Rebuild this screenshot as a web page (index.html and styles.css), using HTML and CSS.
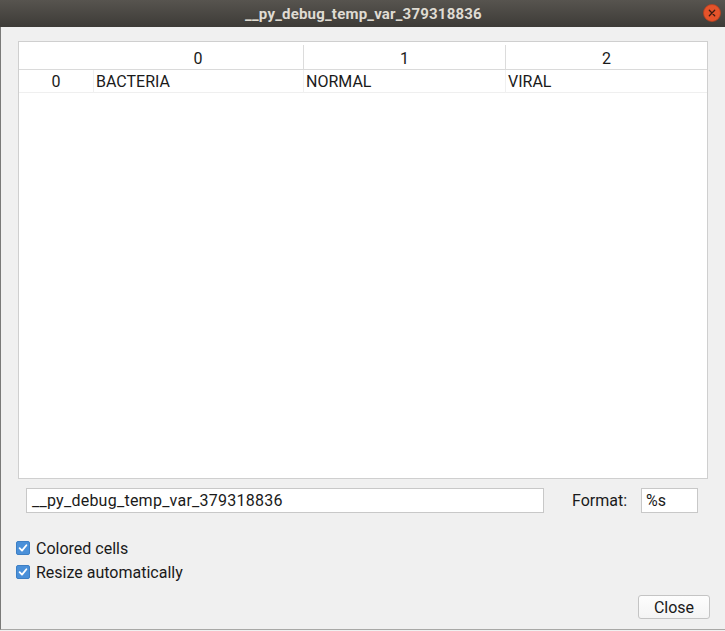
FILE: index.html
```html
<!DOCTYPE html>
<html>
<head>
<meta charset="utf-8">
<link rel="stylesheet" href="styles.css">
</head>
<body>
<div class="window">
  <div class="titlebar">
    <span class="title">__py_debug_temp_var_379318836</span>
    <span class="close-btn"><svg width="18" height="18" viewBox="0 0 18 18"><circle cx="9" cy="9" r="8.5" fill="#e5532a" stroke="#b8401f" stroke-width="0.8"/><path d="M6.3 6.3 L11.7 11.7 M11.7 6.3 L6.3 11.7" stroke="#3a1a10" stroke-width="1.3" stroke-linecap="round"/></svg></span>
  </div>
  <div class="content">
    <div class="table">
      <div class="thead">
        <div class="th idx"></div>
        <div class="th">0</div>
        <div class="th sep">1</div>
        <div class="th sep">2</div>
      </div>
      <div class="trow">
        <div class="td idx">0</div>
        <div class="td">BACTERIA</div>
        <div class="td">NORMAL</div>
        <div class="td">VIRAL</div>
      </div>
    </div>
    <div class="name-row">
      <div class="field name-field">__py_debug_temp_var_379318836</div>
      <span class="format-label">Format:</span>
      <div class="field format-field">%s</div>
    </div>
    <div class="checks">
      <label class="check"><span class="box"><svg width="14" height="14" viewBox="0 0 14 14"><rect x="0.5" y="0.5" width="13" height="13" rx="1.5" fill="#4a90d9" stroke="#3d7fc4"/><path d="M3.6 7.2 L6 9.6 L10.4 4.2" fill="none" stroke="#fff" stroke-width="1.8" stroke-linecap="round" stroke-linejoin="round"/></svg></span>Colored cells</label>
      <label class="check"><span class="box"><svg width="14" height="14" viewBox="0 0 14 14"><rect x="0.5" y="0.5" width="13" height="13" rx="1.5" fill="#4a90d9" stroke="#3d7fc4"/><path d="M3.6 7.2 L6 9.6 L10.4 4.2" fill="none" stroke="#fff" stroke-width="1.8" stroke-linecap="round" stroke-linejoin="round"/></svg></span>Resize automatically</label>
    </div>
    <div class="footer">
      <button class="btn">Close</button>
    </div>
  </div>
</div>
</body>
</html>
```
FILE: styles.css
```css
html, body {
  margin: 0;
  padding: 0;
  background: #f0f0f0;
}
body {
  font-family: Roboto, "Noto Sans", sans-serif;
  font-size: 16px;
  color: #1a1a1a;
}
.window {
  width: 725px;
  height: 630px;
  box-sizing: border-box;
  border-left: 1px solid #7a7a78;
  border-bottom: 1px solid #a8a8a6;
  background: #f0f0f0;
  display: flex;
  flex-direction: column;
}
.titlebar {
  height: 27px;
  flex: none;
  background: linear-gradient(#57544f, #3d3b37);
  display: flex;
  align-items: center;
  justify-content: center;
  position: relative;
  margin-left: -1px;
}
.title {
  color: #dfdbd2;
  font-weight: bold;
  font-size: 15px;
  letter-spacing: 0.2px;
  margin-left: 2px;
}
.close-btn {
  position: absolute;
  right: 4px;
  top: 4px;
  width: 18px;
  height: 18px;
  display: block;
}
.close-btn svg { display: block; }
.content {
  flex: 1;
  display: flex;
  flex-direction: column;
  padding: 14px 16px 0 17px;
}
.table {
  width: 690px;
  height: 438px;
  box-sizing: border-box;
  border: 1px solid #cfcfcf;
  background: #fff;
}
.thead, .trow {
  display: grid;
  grid-template-columns: 74px 210px 202px 1fr;
}
.thead {
  height: 28px;
  border-bottom: 1px solid #dadada;
  box-sizing: border-box;
}
.th {
  text-align: center;
  padding-top: 7px;
  line-height: 20px;
}
.th.sep {
  border-left: 1px solid #dcdcdc;
  margin-top: 3px;
  padding-top: 4px;
}
.trow {
  height: 23px;
  border-bottom: 1px solid #efefef;
  box-sizing: border-box;
}
.td {
  line-height: 22px;
  padding-top: 1px;
  padding-left: 2px;
  border-left: 1px solid #f0f0f0;
}
.td.idx {
  text-align: center;
  padding-left: 0;
  border-left: none;
}
.name-row {
  display: flex;
  align-items: center;
  margin-top: 9px;
  height: 25px;
  padding-left: 8px;
}
.field {
  height: 25px;
  box-sizing: border-box;
  border: 1px solid #c8c8c8;
  background: #fff;
  line-height: 23px;
  padding-left: 5px;
}
.name-field {
  width: 518px;
  letter-spacing: 0.25px;
}
.format-label {
  margin-left: 28px;
  width: 69px;
}
.format-field {
  width: 57px;
  padding-left: 4px;
}
.checks {
  display: flex;
  flex-direction: column;
  margin-top: 25px;
  margin-left: -2px;
  gap: 4px;
}
.check {
  display: flex;
  align-items: center;
  height: 20px;
}
.box {
  width: 14px;
  height: 14px;
  margin-right: 6px;
}
.box svg { display: block; }
.footer {
  display: flex;
  justify-content: flex-end;
  margin-top: 13px;
}
.btn {
  width: 72px;
  height: 24px;
  font-family: inherit;
  font-size: 16px;
  color: #1a1a1a;
  background: linear-gradient(#fdfdfd, #f4f4f4);
  border: 1px solid #c4c4c4;
  border-radius: 3px;
  padding: 0;
  margin-right: -1px;
}
```
